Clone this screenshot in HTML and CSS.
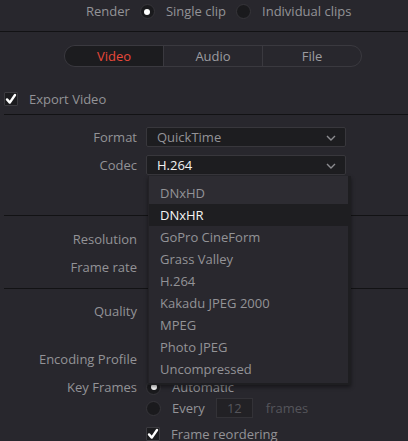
FILE: index.html
```html
<!DOCTYPE html>
<html>
<head>
<meta charset="utf-8">
<link rel="stylesheet" href="styles.css">
</head>
<body>
<div class="panel">
  <div class="topbar">
    <span class="lbl">Render</span>
    <span class="radio on"></span>
    <span class="lbl">Single clip</span>
    <span class="radio"></span>
    <span class="lbl">Individual clips</span>
  </div>
  <div class="sep full"></div>

  <div class="tabs">
    <div class="tab active">Video</div>
    <div class="tab">Audio</div>
    <div class="tab">File</div>
  </div>

  <div class="export-row">
    <span class="check"><svg viewBox="0 0 14 14" width="14" height="14"><path d="M3 7.4 L5.8 10.6 L11 3" fill="none" stroke="#fff" stroke-width="2.4" stroke-linecap="round" stroke-linejoin="round"/></svg></span>
    <span class="lbl">Export Video</span>
  </div>
  <div class="sep inset s1"></div>

  <div class="form-row r-format">
    <span class="flabel">Format</span>
    <div class="select"><span class="val">QuickTime</span><svg class="chev" viewBox="0 0 10 6" width="10" height="6"><path d="M1 1 L5 5 L9 1" fill="none" stroke="#8c8c90" stroke-width="1.4"/></svg></div>
  </div>
  <div class="form-row r-codec">
    <span class="flabel">Codec</span>
    <div class="select"><span class="val white">H.264</span><svg class="chev" viewBox="0 0 10 6" width="10" height="6"><path d="M1 1 L5 5 L9 1" fill="none" stroke="#8c8c90" stroke-width="1.4"/></svg></div>
  </div>
  <div class="sep inset s2"></div>

  <div class="form-row r-res"><span class="flabel">Resolution</span></div>
  <div class="form-row r-fps"><span class="flabel">Frame rate</span></div>
  <div class="sep inset s3"></div>

  <div class="form-row r-quality"><span class="flabel">Quality</span></div>
  <div class="form-row r-enc"><span class="flabel">Encoding Profile</span></div>
  <div class="form-row r-key">
    <span class="flabel">Key Frames</span>
    <span class="radio on"></span>
    <span class="lbl">Automatic</span>
  </div>
  <div class="form-row r-every">
    <span class="flabel"></span>
    <span class="radio"></span>
    <span class="lbl">Every</span>
    <span class="num">12</span>
    <span class="lbl dim">frames</span>
  </div>
  <div class="form-row r-reorder">
    <span class="flabel"></span>
    <span class="check"><svg viewBox="0 0 14 14" width="14" height="14"><path d="M3 7.4 L5.8 10.6 L11 3" fill="none" stroke="#fff" stroke-width="2.4" stroke-linecap="round" stroke-linejoin="round"/></svg></span>
    <span class="lbl">Frame reordering</span>
  </div>

  <div class="popup">
    <div class="item hover">DNxHD</div>
    <div class="item selected">DNxHR</div>
    <div class="item">GoPro CineForm</div>
    <div class="item">Grass Valley</div>
    <div class="item">H.264</div>
    <div class="item">Kakadu JPEG 2000</div>
    <div class="item">MPEG</div>
    <div class="item">Photo JPEG</div>
    <div class="item">Uncompressed</div>
  </div>
</div>
</body>
</html>
```

FILE: styles.css
```css
* { box-sizing: border-box; }
html, body {
  margin: 0;
  padding: 0;
  background: #28272d;
}
body {
  font-family: "Open Sans", "Liberation Sans", sans-serif;
  font-size: 13px;
  color: #939397;
  width: 408px;
  height: 441px;
  overflow: hidden;
}
.panel {
  position: relative;
  width: 408px;
  height: 441px;
}
.lbl { line-height: 18px; white-space: nowrap; }
.lbl.dim { color: #55555b; }

.topbar {
  height: 31px;
  display: flex;
  align-items: flex-start;
  padding: 2px 0 0 86px;
  gap: 10px;
}
.topbar .radio { margin-top: 2px; }
.topbar .radio + .lbl { margin-left: 1px; }

.radio {
  flex: none;
  width: 15px;
  height: 15px;
  border-radius: 50%;
  background: #1a1a1d;
  border: 1px solid #36353a;
  position: relative;
}
.radio.on::after {
  content: "";
  position: absolute;
  left: 3.5px;
  top: 3.5px;
  width: 6px;
  height: 6px;
  border-radius: 50%;
  background: #fff;
}

.sep { height: 1px; background: #121214; }
.sep.inset { margin-left: 4px; }

.tabs {
  margin: 13px 0 0 64px;
  width: 298px;
  height: 22px;
  display: flex;
  border: 1px solid #3a393f;
  border-radius: 11px;
  overflow: hidden;
}
.tab {
  flex: 1;
  display: flex;
  align-items: center;
  justify-content: center;
  color: #9c9ca0;
  line-height: 20px;
  border-left: 1px solid #3a393f;
}
.tab:first-child { border-left: none; }
.tab.active {
  background: #1c1c1f;
  color: #e8483a;
}

.export-row {
  margin-top: 25px;
  height: 14px;
  padding-left: 4px;
  display: flex;
  align-items: center;
  gap: 11px;
}
.check {
  flex: none;
  width: 14px;
  height: 14px;
  background: #1c1c1f;
  border: 1px solid #3c3b40;
  border-radius: 1px;
  display: flex;
  align-items: center;
  justify-content: center;
}
.check svg { flex: none; }
.sep.s1 { margin-top: 8px; }

.form-row {
  display: flex;
  align-items: center;
  height: 20px;
}
.flabel {
  flex: none;
  width: 137px;
  margin-right: 9px;
  text-align: right;
  white-space: nowrap;
  line-height: 20px;
}
.form-row .radio + .lbl,
.form-row .check + .lbl { margin-left: 11px; }

.select {
  width: 200px;
  height: 20px;
  background: #1d1d20;
  border: 1px solid #38373c;
  border-radius: 2px;
  display: flex;
  align-items: center;
  justify-content: space-between;
  padding: 0 9px 0 10px;
}
.val { line-height: 18px; }
.val.white { color: #f2f2f2; }
.chev { flex: none; margin-top: 1px; }

.r-format { margin-top: 12px; }
.r-codec { margin-top: 8px; }
.sep.s2 { margin-top: 40px; }
.r-res { margin-top: 13px; }
.r-fps { margin-top: 8px; }
.sep.s3 { margin-top: 11px; }
.r-quality { margin-top: 12px; }
.r-enc { margin-top: 28px; }
.r-key { margin-top: 8px; }
.r-every { margin-top: 1px; }
.r-reorder { margin-top: 6px; }

.num {
  margin-left: 11px;
  width: 37px;
  height: 20px;
  background: #222125;
  border: 1px solid #333237;
  color: #55555b;
  text-align: center;
  line-height: 18px;
}
.num + .lbl { margin-left: 13px; }

.popup {
  position: absolute;
  left: 148px;
  top: 176px;
  width: 203px;
  height: 209px;
  background: #29282e;
  border-right: 3px solid #1e1e21;
  border-bottom: 2px solid #1e1e21;
  border-left: 1px solid #232226;
  box-shadow: 0 2px 4px rgba(0, 0, 0, 0.45);
  padding: 6px 0 5px;
}
.popup::before {
  content: "";
  position: absolute;
  left: 0; right: 0; top: 0;
  height: 28px;
  background: #2d2c32;
}
.item {
  position: relative;
  height: 22px;
  line-height: 22px;
  padding-left: 11px;
  color: #939397;
  white-space: nowrap;
}
.item.selected {
  background: #1e1e21;
  color: #f4f4f4;
}
```
